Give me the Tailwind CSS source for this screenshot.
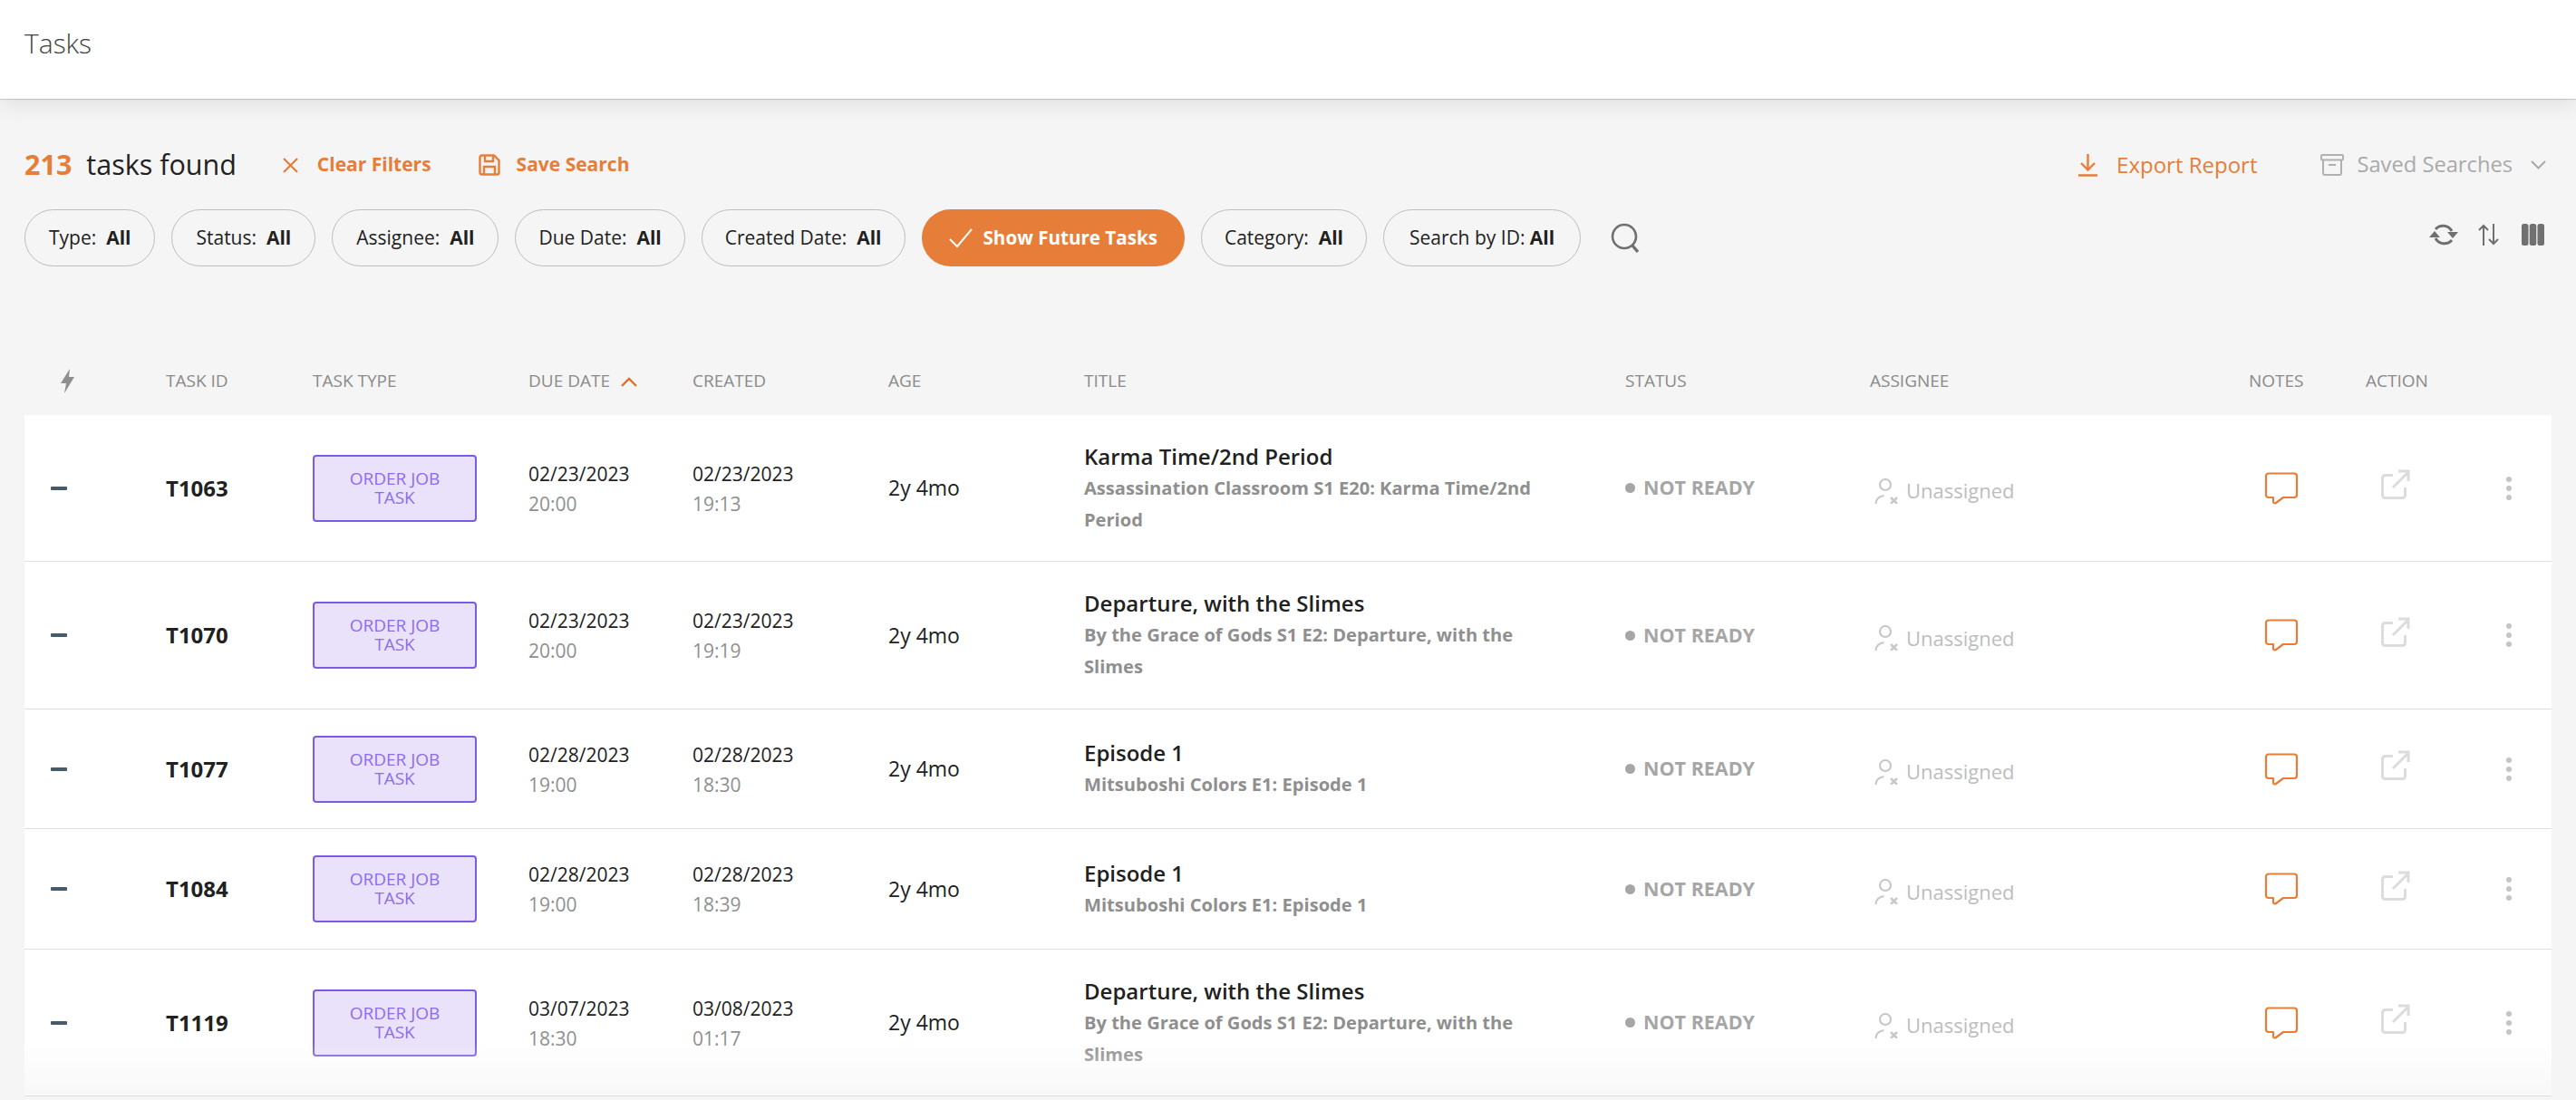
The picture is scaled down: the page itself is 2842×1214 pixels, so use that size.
<!DOCTYPE html>
<html lang="en">
  <head>
    <meta charset="UTF-8">
    <title>Tasks</title>
    <script src="https://cdn.jsdelivr.net/npm/@tailwindcss/browser@4"></script>
  </head>
  <body class="h-screen overflow-hidden bg-[#f5f5f5] font-['Open_Sans',sans-serif] text-[#212121]">
    <header class="relative h-[109px] flex items-center px-[27px] bg-white shadow-[0_1px_1px_rgba(0,0,0,0.14),0_6px_24px_rgba(0,0,0,0.09)]">
      <h1 class="text-[30px] font-light text-[#424242] -mt-[14px]">Tasks</h1>
    </header>

    <main class="px-[27px]">
      <div class="flex items-center h-[36px] mt-[55px]">
        <span class="text-[30.5px] font-bold text-[#e67e3a]">213</span>
        <span class="ml-[16px] text-[30.5px] text-[#212121]">tasks found</span>
        <svg class="ml-[51px] w-[17px] h-[17px] text-[#e67e3a]" viewBox="0 0 17 17" fill="none" stroke="currentColor" stroke-width="2.2"><path d="M1 1l15 15M16 1L1 16"/></svg>
        <span class="ml-[21px] text-[21px] font-bold text-[#e67e3a]">Clear Filters</span>
        <svg class="ml-[52px] w-[24px] h-[24px] text-[#e67e3a]" viewBox="0 0 24 24" fill="none" stroke="currentColor" stroke-width="2.4"><path d="M3.500 1.500H17l5.500 5.500v13.500a2 2 0 0 1-2 2h-17a2 2 0 0 1-2-2v-17a2 2 0 0 1 2-2zM7 2v6h9V2M6 23v-9h12v9"/></svg>
        <span class="ml-[18px] text-[21px] font-bold text-[#e67e3a]">Save Search</span>
        <svg class="ml-auto w-[21px] h-[25px] text-[#e67e3a]" viewBox="0 0 21 25" fill="none" stroke="currentColor" stroke-width="2.4"><path d="M10.500 0v17M3 10l7.500 7.500L18 10M0 23.500h21"/></svg>
        <span class="ml-[21px] text-[24px] text-[#e67e3a]">Export Report</span>
        <svg class="ml-[70px] w-[26px] h-[24px] text-[#b0b0b0]" viewBox="0 0 26 24" fill="none" stroke="currentColor" stroke-width="2"><rect x="1" y="1" width="24" height="5.500" rx="1"/><path d="M3 7v14a2 2 0 0 0 2 2h16a2 2 0 0 0 2-2V7M9 12h8"/></svg>
        <span class="ml-[14px] text-[23.7px] text-[#aaaaaa]">Saved Searches</span>
        <svg class="ml-[20px] mr-[6px] w-[17px] h-[10px] text-[#aaaaaa]" viewBox="0 0 17 10" fill="none" stroke="currentColor" stroke-width="2"><path d="M1 1l7.500 7.500L16 1"/></svg>
      </div>

      <div class="flex items-center mt-[31px]">
        <div class="flex items-center gap-[18px]" id="filters">
          <button class="h-[63px] px-[26px] rounded-full border border-[#bdbdbd] text-[21px]">Type:&nbsp; <b>All</b></button>
          <button class="h-[63px] px-[26px] rounded-full border border-[#bdbdbd] text-[21px]">Status:&nbsp; <b>All</b></button>
          <button class="h-[63px] px-[26px] rounded-full border border-[#bdbdbd] text-[21px]">Assignee:&nbsp; <b>All</b></button>
          <button class="h-[63px] px-[25px] rounded-full border border-[#bdbdbd] text-[21px]">Due Date:&nbsp; <b>All</b></button>
          <button class="h-[63px] px-[25px] rounded-full border border-[#bdbdbd] text-[21px]">Created Date:&nbsp; <b>All</b></button>
          <button class="h-[63px] px-[30px] flex items-center gap-[12px] rounded-full bg-[#e67e3a] text-white text-[20.6px] font-bold">
            <svg class="w-[26px] h-[22px]" viewBox="0 0 26 22" fill="none" stroke="currentColor" stroke-width="2"><path d="M1 12l8 8L25 1"/></svg>
            Show Future Tasks
          </button>
          <button class="h-[63px] px-[25px] rounded-full border border-[#bdbdbd] text-[21px]">Category:&nbsp; <b>All</b></button>
          <button class="h-[63px] px-[28px] rounded-full border border-[#bdbdbd] text-[21px]">Search by ID: <b>All</b></button>
        </div>
        <svg class="ml-[33px] w-[34px] h-[34px] text-[#707070]" viewBox="0 0 34 34" fill="none" stroke="currentColor" stroke-width="2.6"><circle cx="15" cy="15" r="13"/><path d="M24 25l6 7" stroke-width="3.4"/></svg>
        <div class="ml-auto flex items-center mr-[8px] -mt-[8px]">
          <svg class="w-[32px] h-[26px] text-[#707070]" viewBox="0 0 32 26" fill="none" stroke="currentColor" stroke-width="3"><path d="M7 7a11 11 0 0 1 18 2M25 19a11 11 0 0 1-18-2"/><path d="M20 10h12l-6 7zM0 16h12L6 9z" fill="currentColor" stroke="none"/></svg>
          <svg class="ml-[22px] w-[23px] h-[24px] text-[#707070]" viewBox="0 0 23 24" fill="none" stroke="currentColor" stroke-width="2"><path d="M6 24V2M1 7l5-5 5 5M17 0v22M12 17l5 5 5-5"/></svg>
          <svg class="ml-[25px] w-[25px] h-[24px] text-[#707070]" viewBox="0 0 25 24" fill="currentColor"><rect width="7.500" height="24" rx="2.500"/><rect x="8.750" width="7.500" height="24" rx="2.500"/><rect x="17.500" width="7.500" height="24" rx="2.500"/></svg>
        </div>
      </div>

      <div class="grid grid-cols-[156px_162px_238px_181px_216px_216px_597px_270px_418px_129px_211px] items-center h-[76px] mt-[88px] text-[19px] text-[#8a8a8a]">
        <div class="pl-[39px]"><svg class="w-[17px] h-[27px] text-[#8f8f8f]" viewBox="0 0 17 27" fill="currentColor"><path d="M11 0L1 16h6l-2 11 11-18h-6z"/></svg></div>
        <div>TASK ID</div>
        <div>TASK TYPE</div>
        <div class="flex items-center gap-[12px]">DUE DATE <svg class="w-[18px] h-[11px] mt-[3px] text-[#e0702c]" viewBox="0 0 18 11" fill="none" stroke="currentColor" stroke-width="2.4"><path d="M1 10l8-8 8 8"/></svg></div>
        <div>CREATED</div>
        <div>AGE</div>
        <div>TITLE</div>
        <div>STATUS</div>
        <div>ASSIGNEE</div>
        <div>NOTES</div>
        <div>ACTION</div>
      </div>

      <div id="rows" class="bg-white border-b border-[#dcdcdc]"></div>
    </main>

    <div class="absolute left-[27px] right-[21px] top-[1150px] h-[58px] bg-linear-to-b from-white/0 to-[#f5f5f5]/70"></div>

    <script>
      const tasks = [
        { h: 'h-[161px]', id: 'T1063', due: ['02/23/2023', '20:00'], created: ['02/23/2023', '19:13'], title: 'Karma Time/2nd Period', sub: 'Assassination Classroom S1 E20: Karma Time/2nd Period' },
        { h: 'h-[163px]', id: 'T1070', due: ['02/23/2023', '20:00'], created: ['02/23/2023', '19:19'], title: 'Departure, with the Slimes', sub: 'By the Grace of Gods S1 E2: Departure, with the Slimes' },
        { h: 'h-[132px]', id: 'T1077', due: ['02/28/2023', '19:00'], created: ['02/28/2023', '18:30'], title: 'Episode 1', sub: 'Mitsuboshi Colors E1: Episode 1' },
        { h: 'h-[133px]', id: 'T1084', due: ['02/28/2023', '19:00'], created: ['02/28/2023', '18:39'], title: 'Episode 1', sub: 'Mitsuboshi Colors E1: Episode 1' },
        { h: 'h-[162px]', id: 'T1119', due: ['03/07/2023', '18:30'], created: ['03/08/2023', '01:17'], title: 'Departure, with the Slimes', sub: 'By the Grace of Gods S1 E2: Departure, with the Slimes' },
      ];

      function dateCell(d) {
        return `<div class="mt-[2px]"><div class="text-[21px] leading-[33px] font-medium text-[#212121]">${d[0]}</div><div class="text-[21px] leading-[33px] text-[#8f8f8f]">${d[1]}</div></div>`;
      }

      document.getElementById('rows').innerHTML = tasks.map(t => `
        <div class="${t.h} grid grid-cols-[156px_162px_238px_181px_216px_216px_597px_270px_418px_129px_211px] items-center border-t border-[#e0e0e0] first:border-t-0">
          <div class="pl-[29px]"><div class="w-[18px] h-[4px] rounded-[1px] bg-[#455a6b]"></div></div>
          <div class="text-[24px] font-bold">${t.id}</div>
          <div class="w-[181px] h-[74px] flex items-center justify-center text-center rounded-[4px] border-2 border-[#7b5be6] bg-[#eae2fb] text-[19px] leading-[21px] font-medium text-[#8e6cf0]">ORDER JOB<br>TASK</div>
          ${dateCell(t.due)}
          ${dateCell(t.created)}
          <div class="text-[23px] font-medium">2y 4mo</div>
          <div class="pr-[60px]">
            <div class="text-[24px] leading-[34px] font-semibold">${t.title}</div>
            <div class="text-[20.1px] leading-[35px] font-bold text-[#8f8f8f]">${t.sub}</div>
          </div>
          <div class="flex items-center gap-[9px] text-[21.5px] font-bold text-[#a6a6a6]"><span class="w-[11px] h-[11px] rounded-full bg-[#a6a6a6]"></span>NOT READY</div>
          <div class="flex items-center gap-[9px] pl-[5px] mt-[6px] text-[22px] text-[#bdbdbd]">
            <svg class="w-[26px] h-[28px]" viewBox="0 0 26 28" fill="none" stroke="#c8c8c8" stroke-width="2.2"><circle cx="12" cy="7" r="6"/><path d="M1.500 28c0-5 3-8 9-9"/><path d="M18 21l7 7M25 21l-7 7" stroke-width="2.500"/></svg>
            Unassigned
          </div>
          <div class="pl-[17px]"><svg class="w-[38px] h-[36px]" viewBox="0 0 38 36" fill="none" stroke="#e67e3a" stroke-width="2.2" stroke-linejoin="round"><path d="M5 1.500h28a3 3 0 0 1 3 3V25a3 3 0 0 1-3 3H21l-8 6c-1 .7-3 .3-3-1v-5H5a3 3 0 0 1-3-3V4.500a3 3 0 0 1 3-3z"/></svg></div>
          <div class="flex items-center pl-[17px] h-[40px] -mt-[8px]">
            <svg class="w-[32px] h-[33px]" viewBox="0 0 32 33" fill="none" stroke="#dcdcdc" stroke-width="3"><path d="M13 6.500H4.500a3 3 0 0 0-3 3v19a3 3 0 0 0 3 3h19a3 3 0 0 0 3-3V20M13 20L29 4M19 2h11v11"/></svg>
            <div class="ml-auto mr-[50px] mt-[8px] flex flex-col gap-[4px]">
              <span class="w-[6px] h-[6px] rounded-full bg-[#c4c4c4]"></span>
              <span class="w-[6px] h-[6px] rounded-full bg-[#c4c4c4]"></span>
              <span class="w-[6px] h-[6px] rounded-full bg-[#c4c4c4]"></span>
            </div>
          </div>
        </div>`).join('');
    </script>
  </body>
</html>
